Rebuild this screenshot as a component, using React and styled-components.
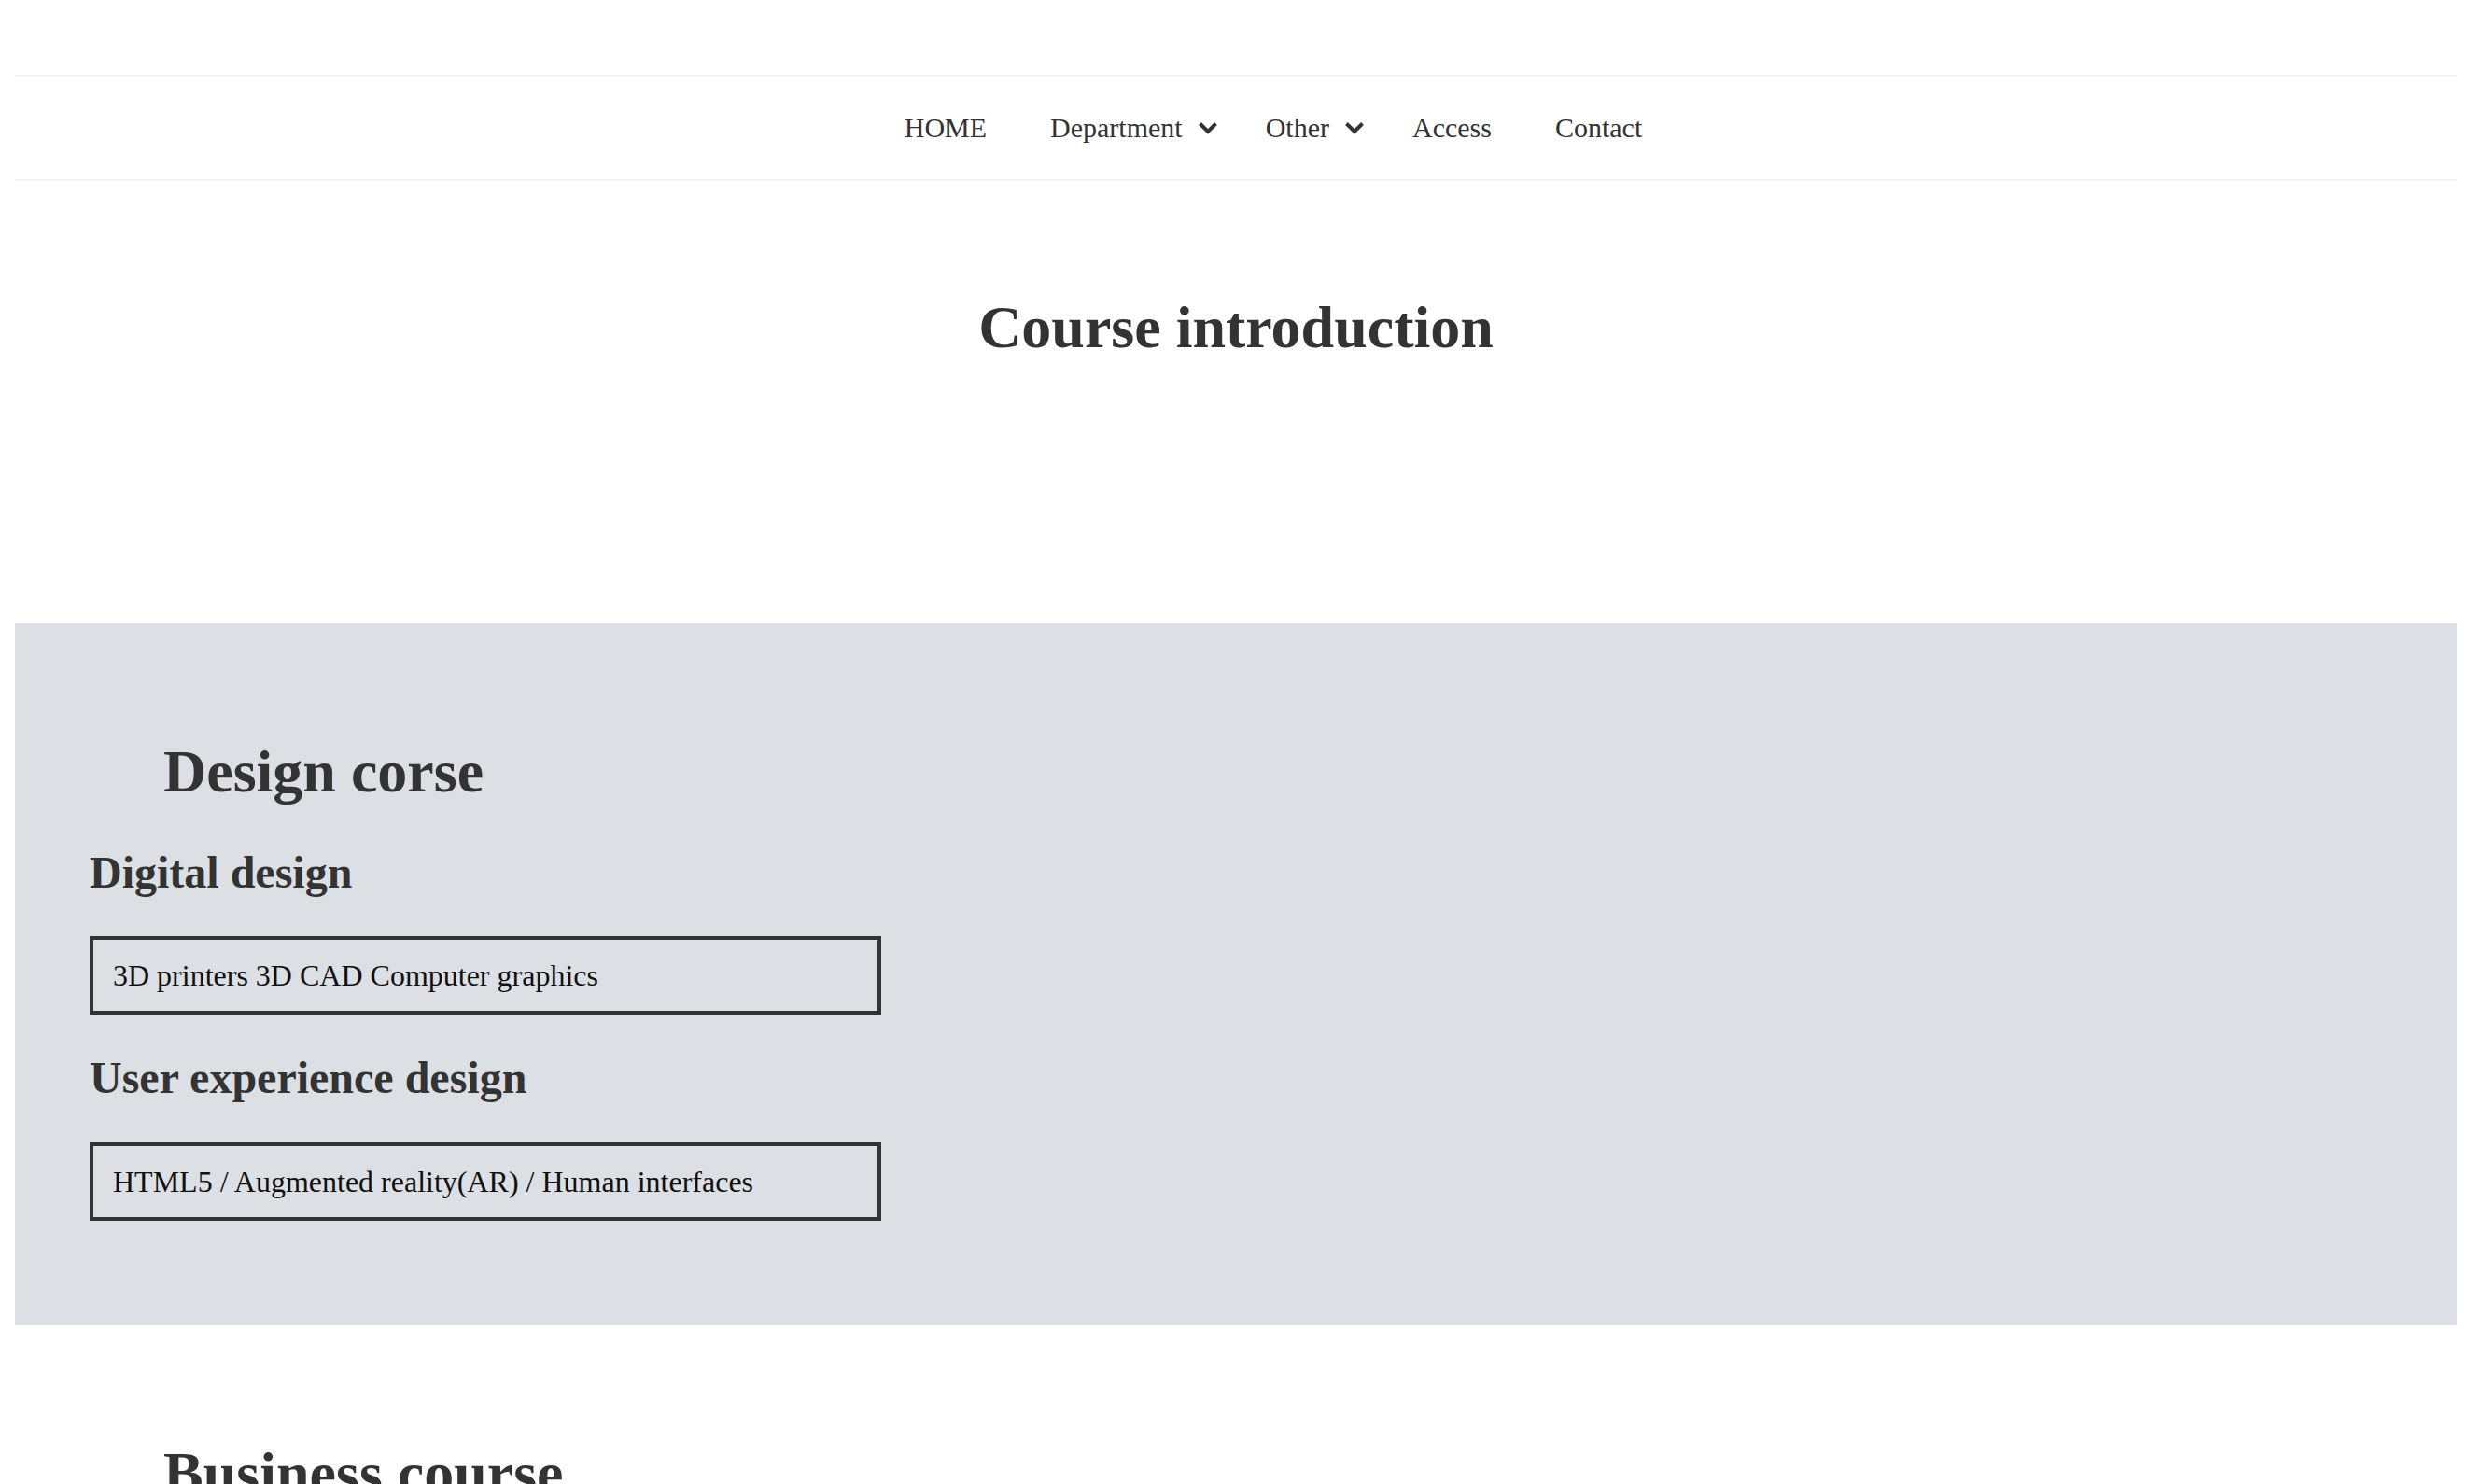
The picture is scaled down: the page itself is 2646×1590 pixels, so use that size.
import React from "react";
import styled, { createGlobalStyle } from "styled-components";

const GlobalStyle = createGlobalStyle`
  body {
    margin: 0;
    background: #ffffff;
    font-family: "Liberation Serif", "Times New Roman", serif;
    color: #333333;
  }
`;

const Page = styled.div`
  padding: 80px 14px 0 16px;
`;

const Header = styled.header`
  display: flex;
  align-items: center;
  height: 110px;
  border-top: 2px solid #f2f2ee;
  border-bottom: 2px solid #f2f2ee;
`;

const NavList = styled.ul`
  display: flex;
  justify-content: center;
  flex: 1;
  list-style: none;
  margin: 0;
  padding: 0 0 0 80px;
`;

const NavItem = styled.li`
  display: flex;
  align-items: center;
  padding: 0 ${(p) => (p.$hasMenu ? "17px" : "34px")} 0 34px;
  font-size: 30px;
  line-height: 1.15;
  color: #333333;
  cursor: pointer;
`;

const Chevron = styled.svg`
  width: 22px;
  height: 14px;
  margin-left: 16px;
  flex-shrink: 0;
`;

const PageTitle = styled.h1`
  margin: 120px 0 280px;
  font-size: 64px;
  line-height: 1.15;
  font-weight: 700;
  text-align: center;
  color: #333333;
`;

const CourseSection = styled.section`
  background: ${(p) => (p.$shaded ? "#dcdfe4" : "transparent")};
  padding: 122px 80px 112px;
`;

const CourseTitle = styled.h2`
  margin: 0 0 44px;
  padding-left: 79px;
  font-size: 64px;
  line-height: 1.15;
  font-weight: 700;
  color: #333333;
`;

const SubjectTitle = styled.h3`
  margin: 0 0 41px;
  font-size: 48px;
  line-height: 1.15;
  font-weight: 700;
  color: #333333;
`;

const SubjectBox = styled.div`
  box-sizing: border-box;
  width: 848px;
  margin-bottom: 40px;
  padding: 20px 21px;
  border: 4px solid #333333;
  font-size: 32px;
  line-height: 36px;
  color: #111111;

  &:last-child {
    margin-bottom: 0;
  }
`;

const navItems = [
  { label: "HOME" },
  { label: "Department", menu: true },
  { label: "Other", menu: true },
  { label: "Access" },
  { label: "Contact" },
];

const courses = [
  {
    title: "Design corse",
    shaded: true,
    subjects: [
      { name: "Digital design", topics: "3D printers 3D CAD Computer graphics" },
      {
        name: "User experience design",
        topics: "HTML5 / Augmented reality(AR) / Human interfaces",
      },
    ],
  },
  {
    title: "Business course",
    shaded: false,
    subjects: [],
  },
];

const ChevronDown = () => (
  <Chevron viewBox="0 0 22 14" aria-hidden="true">
    <polyline
      points="2.5,2.5 11,11 19.5,2.5"
      fill="none"
      stroke="#333333"
      strokeWidth="4"
    />
  </Chevron>
);

export default function App() {
  return (
    <Page>
      <GlobalStyle />
      <Header>
        <NavList>
          {navItems.map((item) => (
            <NavItem key={item.label} $hasMenu={item.menu}>
              {item.label}
              {item.menu && <ChevronDown />}
            </NavItem>
          ))}
        </NavList>
      </Header>

      <PageTitle>Course introduction</PageTitle>

      {courses.map((course) => (
        <CourseSection key={course.title} $shaded={course.shaded}>
          <CourseTitle>{course.title}</CourseTitle>
          {course.subjects.map((subject) => (
            <React.Fragment key={subject.name}>
              <SubjectTitle>{subject.name}</SubjectTitle>
              <SubjectBox>{subject.topics}</SubjectBox>
            </React.Fragment>
          ))}
        </CourseSection>
      ))}
    </Page>
  );
}
